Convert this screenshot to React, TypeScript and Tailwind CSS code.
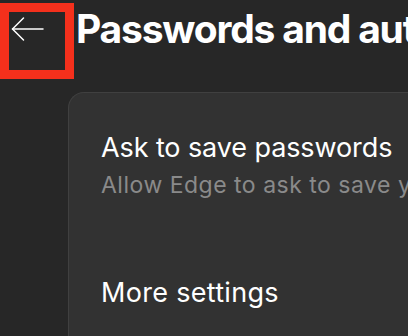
export default function App() {
  return (
    <div className="w-[408px] h-[336px] overflow-hidden bg-[#272727] font-['Inter',sans-serif] text-white">
      {/* Header */}
      <div className="flex items-start whitespace-nowrap">
        <div className="mt-[3px] w-[74px] h-[76px] shrink-0 border-[9px] border-[#f4301c] pt-[4px] pl-[2px]">
          <svg width="34" height="28" viewBox="0 0 34 28" fill="none" stroke="#fff" strokeWidth="1.5" strokeLinecap="round" strokeLinejoin="round">
            <path d="M32 13H1.5" />
            <path d="M12.5 2L1.5 13L12.5 24" />
          </svg>
        </div>
        <h1 className="ml-[2px] mt-[5px] text-[39px] font-bold leading-[48px] tracking-[-1.2px]">
          Passwords and autofill
        </h1>
      </div>

      {/* Card */}
      <div className="ml-[68px] mt-[13px] w-[400px] h-[300px] rounded-tl-[16px] border-l border-t border-[#404040] bg-[#323232] pl-[32px] pt-[38px] whitespace-nowrap">
        <div className="text-[27px] leading-[34px] tracking-[-0.1px]">Ask to save passwords</div>
        <div className="mt-[5px] text-[23px] leading-[30px] tracking-[0.5px] text-[#8a8a8a]">
          Allow Edge to ask to save your passwords
        </div>
        <div className="mt-[76px] text-[27px] leading-[34px] tracking-[0.3px]">More settings</div>
      </div>
    </div>
  );
}
